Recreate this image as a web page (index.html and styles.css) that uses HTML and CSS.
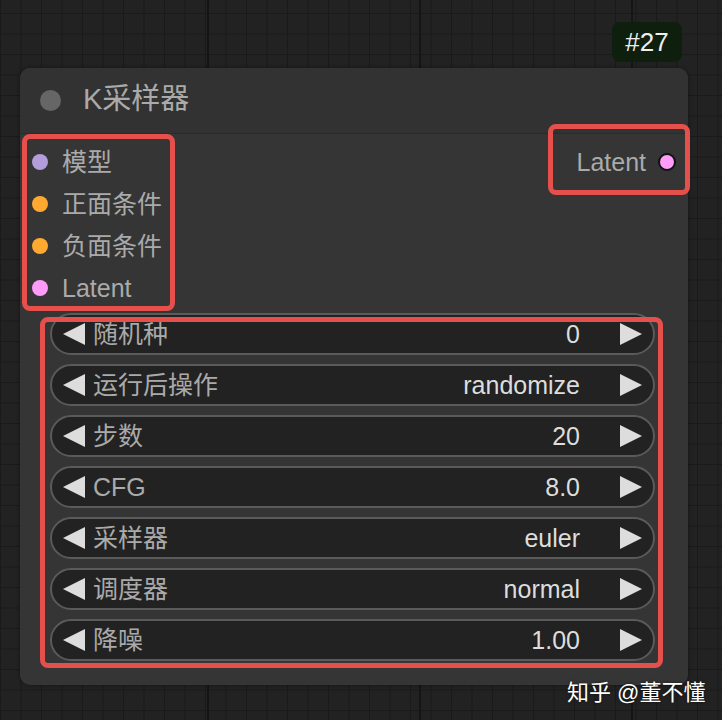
FILE: index.html
```html
<!DOCTYPE html>
<html lang="zh">

<head>
    <meta charset="UTF-8">
    <meta name="viewport" content="width=device-width, initial-scale=1.0">
    <title>K采样器</title>
    <link rel="stylesheet" href="styles.css">
</head>

<body>
    <div class="canvas">
        <div class="node">
            <div class="badge">#27</div>
            <div class="title">
                <span class="title-dot"></span>
                <span class="title-text">K采样器</span>
            </div>
            <div class="slots">
                <div class="inputs mark mark-inputs">
                    <div class="slot"><span class="dot dot-model"></span>模型</div>
                    <div class="slot"><span class="dot dot-cond"></span>正面条件</div>
                    <div class="slot"><span class="dot dot-cond"></span>负面条件</div>
                    <div class="slot"><span class="dot dot-latent"></span>Latent</div>
                </div>
                <div class="outputs mark mark-outputs">
                    <div class="slot">Latent<span class="dot dot-latent linked"></span></div>
                </div>
            </div>
            <div class="widgets mark mark-widgets">
                <div class="widget">
                    <span class="arrow arrow-left"></span>
                    <span class="w-label">随机种</span>
                    <span class="w-value">0</span>
                    <span class="arrow arrow-right"></span>
                </div>
                <div class="widget">
                    <span class="arrow arrow-left"></span>
                    <span class="w-label">运行后操作</span>
                    <span class="w-value">randomize</span>
                    <span class="arrow arrow-right"></span>
                </div>
                <div class="widget">
                    <span class="arrow arrow-left"></span>
                    <span class="w-label">步数</span>
                    <span class="w-value">20</span>
                    <span class="arrow arrow-right"></span>
                </div>
                <div class="widget">
                    <span class="arrow arrow-left"></span>
                    <span class="w-label">CFG</span>
                    <span class="w-value">8.0</span>
                    <span class="arrow arrow-right"></span>
                </div>
                <div class="widget">
                    <span class="arrow arrow-left"></span>
                    <span class="w-label">采样器</span>
                    <span class="w-value">euler</span>
                    <span class="arrow arrow-right"></span>
                </div>
                <div class="widget">
                    <span class="arrow arrow-left"></span>
                    <span class="w-label">调度器</span>
                    <span class="w-value">normal</span>
                    <span class="arrow arrow-right"></span>
                </div>
                <div class="widget">
                    <span class="arrow arrow-left"></span>
                    <span class="w-label">降噪</span>
                    <span class="w-value">1.00</span>
                    <span class="arrow arrow-right"></span>
                </div>
            </div>
        </div>
        <div class="watermark">知乎 @董不懂</div>
    </div>
</body>

</html>
```

FILE: styles.css
```css
body {
    margin: 0;
    font-family: "Liberation Sans", "Noto Sans CJK SC", sans-serif;
}

.canvas {
    position: relative;
    width: 722px;
    height: 720px;
    overflow: hidden;
    box-sizing: border-box;
    padding: 68px 0 0 20px;
    background-color: #222222;
    background-image:
        linear-gradient(90deg, #151515 2px, transparent 2px),
        linear-gradient(#1a1a1a 1px, transparent 1px),
        linear-gradient(90deg, #1a1a1a 1px, transparent 1px);
    background-size: 212px 100%, 20.5px 20.5px, 20.5px 20.5px;
    background-position: 207px 0, 0 13px, 0 0;
}

.node {
    position: relative;
    width: 668px;
    height: 617px;
    box-sizing: border-box;
    background-color: #353535;
    border-radius: 10px;
    box-shadow: 0 0 4px rgba(0, 0, 0, 0.4);
}

.badge {
    position: absolute;
    top: -46px;
    right: 6px;
    width: 70px;
    height: 40px;
    line-height: 40px;
    text-align: center;
    border-radius: 8px;
    background-color: #0e1f0e;
    color: #eeeeee;
    font-size: 26px;
}

.title {
    display: flex;
    align-items: center;
    gap: 22px;
    height: 65px;
    padding-left: 20px;
    background-color: #323232;
    border-radius: 10px 10px 0 0;
    border-bottom: 1px solid #2a2a2a;
}

.title-dot {
    width: 21px;
    height: 21px;
    border-radius: 50%;
    background-color: #666666;
}

.title-text {
    color: #aaaaaa;
    font-size: 29px;
    line-height: 1;
    margin-top: -3px;
}

.slots {
    display: flex;
    align-items: flex-start;
    justify-content: space-between;
    padding: 7px 12px 0;
}

.slot {
    display: flex;
    align-items: center;
    gap: 14px;
    height: 42px;
    color: #aaaaaa;
    font-size: 25px;
    line-height: 1;
}

.outputs .slot {
    gap: 12px;
}

.dot {
    width: 16px;
    height: 16px;
    border-radius: 50%;
}

.dot-model {
    background-color: #b39ddb;
}

.dot-cond {
    background-color: #ffa931;
}

.dot-latent {
    background-color: #ff9cf9;
}

.dot.linked {
    width: 14px;
    height: 14px;
    border: 2px solid #111111;
}

.widgets {
    display: flex;
    flex-direction: column;
    gap: 9px;
    margin: 4px 33px 0 30px;
}

.widget {
    display: flex;
    align-items: center;
    height: 42px;
    box-sizing: border-box;
    padding: 0 11px;
    border: 2px solid #5a5a5a;
    border-radius: 21px;
    background-color: #222222;
    font-size: 25px;
    line-height: 1;
}

.arrow {
    width: 0;
    height: 0;
    border-top: 11px solid transparent;
    border-bottom: 11px solid transparent;
}

.arrow-left {
    border-right: 22px solid #dddddd;
}

.arrow-right {
    border-left: 22px solid #dddddd;
}

.w-label {
    flex: 1;
    margin-left: 8px;
    color: #aaaaaa;
}

.w-value {
    margin-right: 40px;
    color: #dddddd;
}

/* red annotation frames */
.mark {
    position: relative;
}

.mark::after {
    content: "";
    position: absolute;
    border: 5px solid #e5504d;
    border-radius: 8px;
    pointer-events: none;
}

.mark-inputs::after {
    top: -7px;
    left: -10px;
    right: -13px;
    bottom: -2px;
}

.mark-outputs::after {
    top: -17px;
    left: -28px;
    right: -14px;
    bottom: -12px;
}

.mark-widgets::after {
    top: 4px;
    left: -10px;
    right: -8px;
    bottom: -7px;
}

.watermark {
    position: absolute;
    left: 567px;
    top: 674px;
    color: #ffffff;
    font-size: 22px;
    text-shadow: 0 0 3px rgba(0, 0, 0, 0.6);
}
```
